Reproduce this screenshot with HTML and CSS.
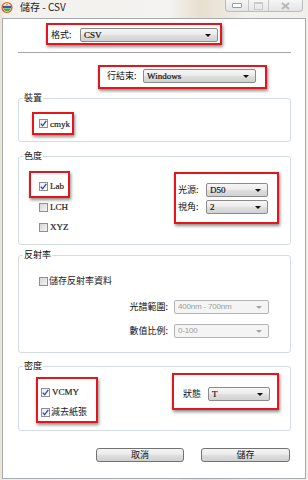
FILE: index.html
```html
<!DOCTYPE html>
<html lang="zh-Hant">
<head>
<meta charset="utf-8">
<title>儲存 - CSV</title>
<link rel="stylesheet" href="styles.css">
</head>
<body>
<div class="window">
  <div class="titlebar">
    <svg class="app-icon" width="12" height="13" viewBox="0 0 12 13">
      <circle cx="6" cy="6.5" r="5.6" fill="#e2662c"/>
      <circle cx="6" cy="6.5" r="4.2" fill="#fdf6e8"/>
      <rect x="1.8" y="4.8" width="8.4" height="2.4" fill="#2c5cb8"/>
      <path d="M2.2 7.6 H9.8 A4 4 0 0 1 2.2 7.6 Z" fill="#4aa64a"/>
      <circle cx="6" cy="3.4" r="1" fill="#f0b020"/>
    </svg>
    <span class="title">儲存 - CSV</span>
    <div class="caption-btns">
      <span class="cbtn cbtn-min"><span class="min-glyph"></span></span>
      <span class="cbtn cbtn-max"><span class="max-glyph"></span></span>
      <span class="cbtn cbtn-close">
        <svg width="9" height="8" viewBox="0 0 9 8"><path d="M1 1 L8 7 M8 1 L1 7" stroke="#b8b8b8" stroke-width="2" fill="none"/></svg>
      </span>
    </div>
  </div>

  <div class="client">
    <div class="hl hl-format">
      <span class="lbl lbl-format">格式:</span>
      <div class="select sel-format"><span class="val">CSV</span><span class="arrow"></span></div>
    </div>

    <div class="sep"></div>

    <div class="hl hl-eol">
      <span class="lbl lbl-eol">行結束:</span>
      <div class="select sel-eol"><span class="val">Windows</span><span class="arrow"></span></div>
    </div>

    <div class="group g-device">
      <div class="legend">裝置</div>
      <div class="hl hl-device">
        <label class="check"><span class="box checked"><svg width="7" height="7" viewBox="0 0 7 7"><path d="M0.8 3.6 L2.6 5.8 L6.3 0.8" stroke="#2444b4" stroke-width="1.3" fill="none"/></svg></span><span class="ctext">cmyk</span></label>
      </div>
    </div>

    <div class="group g-color">
      <div class="legend">色度</div>
      <div class="gbody">
        <div class="col-left">
          <div class="hl hl-lab">
            <label class="check"><span class="box checked"><svg width="7" height="7" viewBox="0 0 7 7"><path d="M0.8 3.6 L2.6 5.8 L6.3 0.8" stroke="#2444b4" stroke-width="1.3" fill="none"/></svg></span><span class="ctext">Lab</span></label>
          </div>
          <label class="check check-lch"><span class="box"></span><span class="ctext">LCH</span></label>
          <label class="check check-xyz"><span class="box"></span><span class="ctext">XYZ</span></label>
        </div>
        <div class="hl hl-light">
          <div class="frow">
            <span class="lbl lbl-light">光源:</span>
            <div class="select sel-light"><span class="val">D50</span><span class="arrow"></span></div>
          </div>
          <div class="frow">
            <span class="lbl lbl-light">視角:</span>
            <div class="select sel-light"><span class="val">2</span><span class="arrow"></span></div>
          </div>
        </div>
      </div>
    </div>

    <div class="group g-refl">
      <div class="legend">反射率</div>
      <label class="check check-refl"><span class="box"></span><span class="ctext cjk">儲存反射率資料</span></label>
      <div class="frow frow-refl frow-range">
        <span class="lbl lbl-refl">光譜範圍:</span>
        <div class="select disabled sel-refl"><span class="val">400nm - 700nm</span><span class="arrow"></span></div>
      </div>
      <div class="frow frow-refl frow-scale">
        <span class="lbl lbl-refl">數值比例:</span>
        <div class="select disabled sel-refl"><span class="val">0-100</span><span class="arrow"></span></div>
      </div>
    </div>

    <div class="group g-density">
      <div class="legend">密度</div>
      <div class="gbody gbody-density">
        <div class="hl hl-vcmy">
          <label class="check"><span class="box checked"><svg width="7" height="7" viewBox="0 0 7 7"><path d="M0.8 3.6 L2.6 5.8 L6.3 0.8" stroke="#2444b4" stroke-width="1.3" fill="none"/></svg></span><span class="ctext">VCMY</span></label>
          <label class="check"><span class="box checked"><svg width="7" height="7" viewBox="0 0 7 7"><path d="M0.8 3.6 L2.6 5.8 L6.3 0.8" stroke="#2444b4" stroke-width="1.3" fill="none"/></svg></span><span class="ctext cjk">減去紙張</span></label>
        </div>
        <div class="hl hl-status">
          <span class="lbl lbl-status">狀態</span>
          <div class="select sel-status"><span class="val">T</span><span class="arrow"></span></div>
        </div>
      </div>
    </div>

    <div class="buttons">
      <button class="btn btn-cancel">取消</button>
      <button class="btn btn-save">儲存</button>
    </div>
  </div>
</div>
</body>
</html>
```

FILE: styles.css
```css
html, body {
  margin: 0;
  padding: 0;
}
body {
  width: 308px;
  height: 480px;
  overflow: hidden;
  font-family: "Noto Sans CJK TC", "Noto Sans", sans-serif;
  font-size: 9px;
  color: #111;
}
.window {
  width: 308px;
  height: 480px;
  display: flex;
  flex-direction: column;
  background: linear-gradient(to right, #e9e2d8 0, #f3f1ed 2%, #f4f3f1 55%, #e7dfcf 65%, #ece6da 72%, #f2f1ee 80%, #f0efec 100%);
}

/* title bar */
.titlebar {
  height: 18px;
  display: flex;
  align-items: flex-start;
  flex: none;
}
.app-icon {
  margin: 1px 0 0 1px;
  flex: none;
}
.title {
  margin: 1px 0 0 7px;
  font-family: "Noto Sans CJK TC", sans-serif;
  font-size: 10px;
  line-height: 12px;
  color: #1a1a1a;
}
.caption-btns {
  margin-left: auto;
  margin-right: 5px;
  display: flex;
  height: 12px;
  border: 1px solid #b9bcc0;
  border-top: none;
  border-radius: 0 0 4px 4px;
  background: linear-gradient(#f6f6f6, #e4e4e4);
  box-sizing: border-box;
}
.cbtn {
  display: flex;
  align-items: center;
  justify-content: center;
  height: 11px;
  box-sizing: border-box;
}
.cbtn-min { width: 23px; border-right: 1px solid #c4c6c9; }
.cbtn-max { width: 20px; border-right: 1px solid #c4c6c9; }
.cbtn-close { width: 33px; }
.min-glyph {
  width: 8px;
  height: 3px;
  border: 1px solid #9b9b9b;
  border-radius: 1px;
  background: #fff;
}
.max-glyph {
  width: 7px;
  height: 5px;
  border: 1px solid #c9c9c9;
  border-top-width: 2px;
}

/* client area */
.client {
  margin: 0 2px 1px 2px;
  height: 461px;
  border: 1px solid #a6abb0;
  background: #fff;
  box-sizing: border-box;
  display: flex;
  flex-direction: column;
  align-items: flex-start;
}

/* red highlight boxes */
.hl {
  border: 2px solid #e4161d;
  box-shadow: 1px 2px 3px rgba(0, 0, 0, 0.45);
  box-sizing: border-box;
  display: flex;
  flex: none;
}

.lbl {
  flex: none;
  font-size: 9px;
  line-height: 14px;
  white-space: nowrap;
  color: #111;
}

/* combobox */
.select {
  display: flex;
  align-items: center;
  height: 14px;
  box-sizing: border-box;
  border: 1px solid #8b8b8b;
  border-radius: 2px;
  background: linear-gradient(#f6f6f6 0, #ececec 45%, #dedede 55%, #d2d2d2 100%);
  padding: 0 6px 0 3px;
  flex: none;
}
.select .val {
  font-family: "Liberation Serif", serif;
  font-size: 9px;
  line-height: 12px;
  color: #111;
  -webkit-text-stroke: 0.2px #111;
}
.select .arrow {
  margin-left: auto;
  width: 0;
  height: 0;
  border-left: 3px solid transparent;
  border-right: 3px solid transparent;
  border-top: 3px solid #111;
  margin-top: 1px;
}
.select.disabled {
  border-color: #b4b4b4;
  background: #f4f4f4;
}
.select.disabled .val {
  font-family: "Liberation Sans", sans-serif;
  font-size: 8px;
  color: #9c9c9c;
  -webkit-text-stroke: 0;
  letter-spacing: -0.2px;
}
.select.disabled .arrow {
  border-top-color: #a5a5a5;
}

/* format row */
.hl-format {
  margin: 4px 0 0 43px;
  width: 176px;
  height: 22px;
  padding: 0 2px 1px 3px;
  align-items: flex-end;
}
.lbl-format { width: 29px; }
.sel-format { width: 138px; }

.sep {
  margin: 7px 0 0 15px;
  width: 273px;
  height: 1px;
  background: #a5a5a5;
  flex: none;
}

/* line ending row */
.hl-eol {
  margin: 12px 0 0 95px;
  width: 169px;
  height: 24px;
  padding: 2px 0 0 7px;
  align-items: flex-start;
}
.lbl-eol { width: 36px; }
.sel-eol { width: 113px; }

/* group boxes */
.group {
  margin-left: 15px;
  width: 273px;
  border: 1px solid #d3dce3;
  border-radius: 3px;
  box-sizing: border-box;
  display: flex;
  flex-direction: column;
  align-items: flex-start;
  flex: none;
}
.legend {
  margin: -7px 0 0 4px;
  padding: 0 1px;
  background: #fff;
  font-size: 9px;
  line-height: 12px;
  color: #111;
}

/* check boxes */
.check {
  display: flex;
  align-items: center;
  height: 12px;
  flex: none;
}
.box {
  width: 9px;
  height: 9px;
  box-sizing: border-box;
  border: 1px solid #8f8f8f;
  background: linear-gradient(135deg, #d6d6d6, #f4f4f4);
  display: flex;
  align-items: center;
  justify-content: center;
  flex: none;
}
.box.checked {
  background: linear-gradient(135deg, #ececec, #fdfdfd);
}
.ctext {
  margin-left: 2px;
  font-family: "Liberation Serif", serif;
  font-size: 9px;
  line-height: 12px;
  color: #222;
  -webkit-text-stroke: 0.2px #222;
}
.ctext.cjk {
  font-family: "Noto Sans CJK TC", sans-serif;
  -webkit-text-stroke: 0;
  margin-left: 1px;
}

/* device */
.g-device {
  margin-top: 9px;
  height: 44px;
}
.hl-device {
  margin: 8px 0 0 13px;
  width: 42px;
  height: 23px;
  padding-left: 5px;
  align-items: center;
}

/* color */
.g-color {
  margin-top: 14px;
  height: 89px;
}
.gbody {
  display: flex;
  align-items: flex-start;
  width: 100%;
}
.g-color .gbody { margin-top: 9px; }
.col-left {
  margin-left: 10px;
  display: flex;
  flex-direction: column;
  align-items: flex-start;
}
.hl-lab {
  width: 41px;
  height: 27px;
  padding: 7px 0 0 8px;
  align-items: flex-start;
}
.check-lch { margin: 3px 0 0 10px; }
.check-xyz { margin: 8px 0 0 10px; }
.hl-light {
  margin: 1px 11px 0 auto;
  width: 105px;
  height: 52px;
  padding: 9px 0 0 2px;
  flex-direction: column;
  gap: 3px;
}
.frow {
  display: flex;
  align-items: center;
}
.lbl-light { width: 28px; }
.sel-light { width: 62px; }

/* reflectance */
.g-refl {
  margin-top: 10px;
  height: 98px;
}
.check-refl { margin: 14px 0 0 20px; }
.frow-refl { margin-left: 101px; }
.frow-range { margin-top: 13px; }
.frow-scale { margin-top: 10px; }
.lbl-refl {
  width: 48px;
  text-align: right;
  margin-right: 6px;
}
.sel-refl { width: 95px; }

/* density */
.g-density {
  margin-top: 13px;
  height: 65px;
}
.hl-vcmy {
  margin: 5px 0 0 17px;
  width: 62px;
  height: 46px;
  padding: 7px 0 0 3px;
  flex-direction: column;
  gap: 8px;
}
.hl-status {
  margin: 1px 11px 0 auto;
  width: 107px;
  height: 37px;
  padding: 12px 0 0 9px;
  align-items: flex-start;
}
.lbl-status { width: 25px; }
.sel-status { width: 62px; }

/* buttons */
.buttons {
  margin-top: 17px;
  align-self: stretch;
  display: flex;
  justify-content: flex-end;
  gap: 17px;
  padding-right: 15px;
}
.btn {
  height: 14px;
  padding: 0;
  margin: 0;
  box-sizing: border-box;
  border: 1px solid #727272;
  border-radius: 3px;
  background: linear-gradient(#f4f4f4 0, #ebebeb 45%, #dddddd 55%, #d0d0d0 100%);
  font-family: "Noto Sans CJK TC", sans-serif;
  font-size: 9px;
  line-height: 12px;
  color: #111;
}
.btn-cancel { width: 88px; }
.btn-save { width: 89px; }
```
